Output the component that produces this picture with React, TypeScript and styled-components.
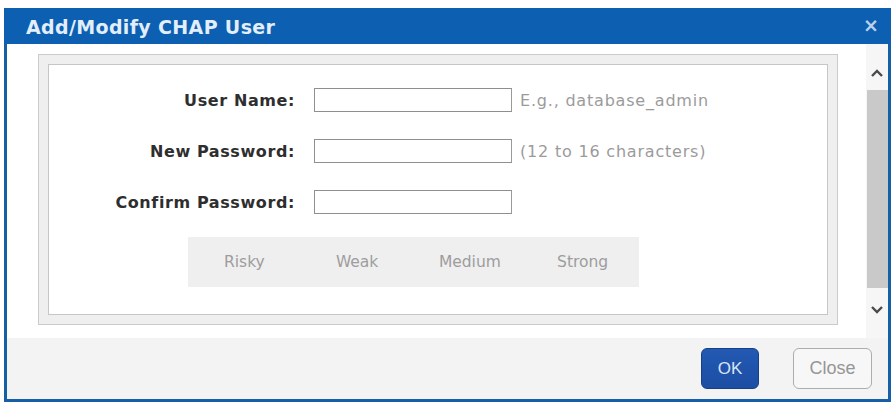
import React from "react";
import styled, { createGlobalStyle } from "styled-components";

const Global = createGlobalStyle`
  html, body { margin: 0; padding: 0; background: #ffffff; }
  body { width: 895px; height: 404px; overflow: hidden; font-family: "DejaVu Sans", Verdana, sans-serif; }
`;

const Page = styled.div`
  padding: 8px 0 0 4px;
`;

const Dialog = styled.div`
  width: 887px;
  height: 394px;
  box-sizing: border-box;
  border: 3px solid #145fa6;
  border-top: 0;
  display: flex;
  flex-direction: column;
  background: #ffffff;
`;

const TitleBar = styled.div`
  height: 36px;
  flex: none;
  background: #0c5fb1;
  display: flex;
  align-items: center;
  justify-content: space-between;
  padding: 0 12px 0 22px;
  margin: 0 -3px;
`;

const Title = styled.div`
  color: #e2eefa;
  font-family: "DejaVu Sans", Verdana, sans-serif;
  font-weight: bold;
  font-size: 19px;
  letter-spacing: 0.35px;
  padding-top: 1px;
`;

const CloseX = styled.div`
  color: #b9d2ea;
  font-family: "DejaVu Sans", sans-serif;
  font-weight: bold;
  font-size: 19px;
  line-height: 1;
  margin-top: -2px;
`;

const Body = styled.div`
  flex: 1;
  display: flex;
  min-height: 0;
`;

const Content = styled.div`
  flex: 1;
  padding: 10px 28px 0 31px;
`;

const Frame = styled.div`
  border: 1px solid #cbcbcb;
  background: #efefef;
  padding: 9px;
  height: 271px;
  box-sizing: border-box;
`;

const Inner = styled.div`
  border: 1px solid #c6c6c6;
  background: #ffffff;
  height: 100%;
  box-sizing: border-box;
  padding-top: 23px;
`;

const Form = styled.div`
  display: grid;
  grid-template-columns: 246px 198px auto;
  column-gap: 19px;
  row-gap: 27px;
  align-items: center;
`;

const Label = styled.div`
  text-align: right;
  font-family: "DejaVu Sans", Verdana, sans-serif;
  font-weight: bold;
  font-size: 16px;
  letter-spacing: 0.6px;
  color: #2e2e2e;
`;

const Input = styled.div`
  height: 24px;
  box-sizing: border-box;
  border: 1px solid #8f8f8f;
  border-right-color: #9a9a9a;
  background: #ffffff;
`;

const Hint = styled.div`
  margin-left: -11px;
  font-family: "DejaVu Sans", Verdana, sans-serif;
  font-size: 16px;
  letter-spacing: 0.8px;
  color: #9b9b9b;
`;

const Strength = styled.div`
  margin: 23px 0 0 139px;
  width: 451px;
  height: 50px;
  background: #efefef;
  display: grid;
  grid-template-columns: repeat(4, 1fr);
  align-items: center;
`;

const Level = styled.div`
  text-align: center;
  font-family: "DejaVu Sans", Verdana, sans-serif;
  font-size: 15.5px;
  color: #9d9d9d;
`;

const Scroll = styled.div`
  width: 22px;
  flex: none;
  background: #f6f6f6;
  display: flex;
  flex-direction: column;
  align-items: center;
  padding-top: 21px;
  box-sizing: border-box;
`;

const Arrow = styled.div`
  height: 16px;
  display: flex;
  align-items: center;
  justify-content: center;
`;

const Thumb = styled.div`
  width: 21px;
  height: 198px;
  background: #c9c9c9;
  margin: 9px 0 14px;
`;

const Footer = styled.div`
  height: 61px;
  flex: none;
  background: #f3f3f3;
  display: flex;
  align-items: flex-start;
  justify-content: flex-end;
  gap: 34px;
  padding: 10px 16px 0 0;
  box-sizing: border-box;
`;

const OkButton = styled.div`
  width: 58px;
  height: 41px;
  box-sizing: border-box;
  border-radius: 6px;
  background: linear-gradient(#2359b3, #1c4ea3);
  border: 1px solid #163f86;
  color: #d9e4f5;
  font-family: "Liberation Sans", Arial, sans-serif;
  font-size: 17px;
  display: flex;
  align-items: center;
  justify-content: center;
`;

const CloseButton = styled.div`
  width: 79px;
  height: 41px;
  box-sizing: border-box;
  border-radius: 6px;
  background: #f7f7f7;
  border: 1px solid #adadad;
  color: #969696;
  font-family: "Liberation Sans", Arial, sans-serif;
  font-size: 18px;
  display: flex;
  align-items: center;
  justify-content: center;
`;

const Chevron = ({ up }: { up?: boolean }) => (
  <svg width="14" height="10" viewBox="0 0 14 10">
    <path
      d={up ? "M2 8 L7 3 L12 8" : "M2 2 L7 7 L12 2"}
      fill="none"
      stroke="#4a4a4a"
      strokeWidth="2.4"
    />
  </svg>
);

export default function App() {
  return (
    <>
      <Global />
      <Page>
        <Dialog>
          <TitleBar>
            <Title>Add/Modify CHAP User</Title>
            <CloseX>×</CloseX>
          </TitleBar>
          <Body>
            <Content>
              <Frame>
                <Inner>
                  <Form>
                    <Label>User Name:</Label>
                    <Input />
                    <Hint>E.g., database_admin</Hint>
                    <Label>New Password:</Label>
                    <Input />
                    <Hint>(12 to 16 characters)</Hint>
                    <Label>Confirm Password:</Label>
                    <Input />
                    <span />
                  </Form>
                  <Strength>
                    <Level>Risky</Level>
                    <Level>Weak</Level>
                    <Level>Medium</Level>
                    <Level>Strong</Level>
                  </Strength>
                </Inner>
              </Frame>
            </Content>
            <Scroll>
              <Arrow><Chevron up /></Arrow>
              <Thumb />
              <Arrow><Chevron /></Arrow>
            </Scroll>
          </Body>
          <Footer>
            <OkButton>OK</OkButton>
            <CloseButton>Close</CloseButton>
          </Footer>
        </Dialog>
      </Page>
    </>
  );
}
